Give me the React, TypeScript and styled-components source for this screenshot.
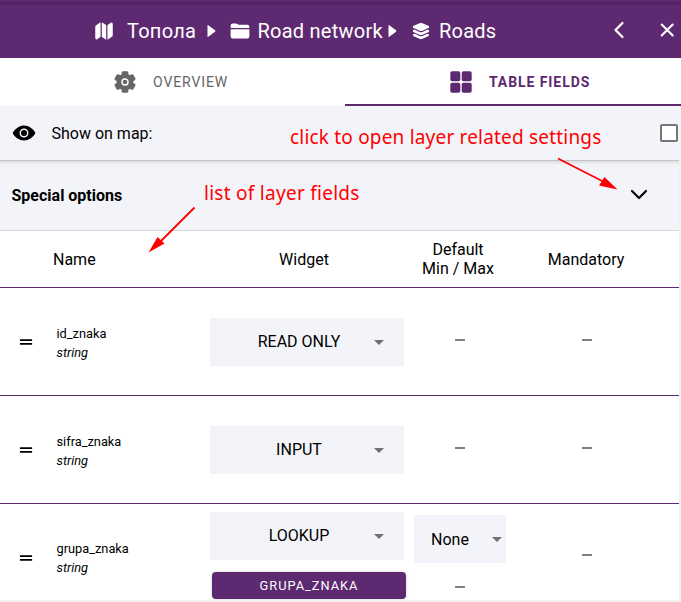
import React from "react";
import styled, { createGlobalStyle } from "styled-components";
import {
  IoMap,
  IoFolder,
  IoLayers,
  IoSettings,
  IoEye,
  IoReorderTwo,
} from "react-icons/io5";

const purple = "#5d2971";
const pale = "#f3f4f9";

const GlobalStyle = createGlobalStyle`
  * { box-sizing: border-box; }
  body { margin: 0; background: #fff; overflow: hidden; }
`;

const Page = styled.main`
  position: relative;
  width: 681px;
  height: 602px;
  overflow: hidden;
  display: flex;
  flex-direction: column;
  background: #fff;
  color: #000;
  font: 16px/19px Roboto, sans-serif;
`;

const Header = styled.header`
  height: 58px;
  flex: none;
  display: flex;
  align-items: center;
  padding: 4px 6px 0 94px;
  background: linear-gradient(#5d2971 0 2px, #4e205f 2px, #5d2971 6px);
  color: #fff;
`;

const Crumb = styled.div<{ $width: number; $gap: number; $spacing: number }>`
  display: flex;
  align-items: center;
  gap: ${(p) => p.$gap}px;
  width: ${(p) => p.$width}px;
  font-size: 20px;
  line-height: 24px;
  letter-spacing: ${(p) => p.$spacing}px;
  white-space: nowrap;
  svg { flex: none; }
`;

const Separator = styled.svg<{ $after: number }>`
  flex: none;
  width: 9px;
  height: 12px;
  margin-right: ${(p) => p.$after}px;
`;

const HeaderActions = styled.div`
  display: flex;
  align-items: center;
  gap: 34px;
  height: 20px;
  margin: -3px 0 0 auto;
`;

const Tabs = styled.nav`
  height: 48px;
  flex: none;
  display: grid;
  grid-template-columns: 345px 336px;
`;

const Tab = styled.div<{ $active?: boolean }>`
  display: flex;
  align-items: center;
  gap: ${(p) => (p.$active ? 17 : 16)}px;
  padding-left: ${(p) => (p.$active ? 105 : 113)}px;
  padding-top: ${(p) => (p.$active ? 2 : 0)}px;
  border-bottom: ${(p) => (p.$active ? `2px solid ${purple}` : "0")};
  color: ${(p) => (p.$active ? purple : "#666")};
  font-size: 14px;
  font-weight: ${(p) => (p.$active ? 700 : 400)};
  letter-spacing: ${(p) => (p.$active ? 0.92 : 0.9)}px;
`;

const MapRow = styled.section`
  height: 54px;
  flex: none;
  display: flex;
  align-items: center;
  gap: 15.5px;
  padding: 0 3px 0 12px;
  background: ${pale};
`;

const Checkbox = styled.span`
  width: 18px;
  height: 18px;
  margin-left: auto;
  border: 2px solid #767676;
  border-radius: 2px;
  background: #fff;
`;

const Panel = styled.div`
  flex: 1;
  width: 681px;
  border-right: 2px solid #f0f0f0;
  border-bottom: 2px solid #f0f0f0;
  overflow: hidden;
`;

const SpecialOptions = styled.section`
  height: 71px;
  display: flex;
  align-items: center;
  justify-content: space-between;
  padding: 0 31px 0 11.5px;
  background: linear-gradient(#c4c5c9 0 1px, #dcdde1 1px, ${pale} 5px);
  border-bottom: 1px solid #d5d6da;
  font-weight: 700;
`;

const Grid = styled.div<{ $height: number }>`
  display: grid;
  grid-template-columns: 53px 156px 202px 94px 174px;
  height: ${(p) => p.$height}px;
  border-bottom: 1px solid ${purple};
  align-items: center;
`;

const Heading = styled.div<{ $nudge?: number }>`
  text-align: center;
  padding-right: ${(p) => p.$nudge ?? 0}px;
`;

const NameHeading = styled(Heading)`
  text-align: left;
`;

const Handle = styled.div`
  display: flex;
  padding-left: 16px;
`;

const FieldName = styled.div<{ $shift: number }>`
  padding-left: 3.5px;
  margin-top: ${(p) => p.$shift}px;
  font-size: 12.8px;
  em { display: block; }
`;

const WidgetCell = styled.div<{ $top?: boolean }>`
  display: flex;
  flex-direction: column;
  gap: 12px;
  padding-left: 1px;
  align-self: ${(p) => (p.$top ? "start" : "center")};
  padding-top: ${(p) => (p.$top ? 8 : 0)}px;
`;

const Select = styled.div<{ $width: number; $end: number; $lift?: number }>`
  width: ${(p) => p.$width}px;
  height: 48px;
  display: grid;
  grid-template-columns: 1fr 10px;
  align-items: center;
  padding: 0 ${(p) => p.$end}px ${(p) => p.$lift ?? 0}px 16px;
  background: ${pale};
  text-align: center;
  svg { margin-top: 1px; }
`;

const SelectLabel = styled.span<{ $inset: number }>`
  padding-right: ${(p) => p.$inset}px;
`;

const LookupButton = styled.button`
  width: 194px;
  height: 27px;
  margin-left: 2px;
  padding: 0;
  border: 0;
  border-radius: 4px;
  background: ${purple};
  box-shadow: 0 0 3px rgba(0, 0, 0, 0.2);
  color: #fff;
  font: 12.8px/27px Roboto, sans-serif;
  letter-spacing: 1px;
`;

const DashCell = styled.div<{ $left: number; $shift?: number }>`
  display: flex;
  flex-direction: column;
  padding-left: ${(p) => p.$left}px;
  margin-top: ${(p) => p.$shift ?? 0}px;
`;

const Dash = styled.span`
  width: 10px;
  height: 2px;
  background: #808080;
`;

const DefaultCell = styled.div`
  display: flex;
  flex-direction: column;
  align-self: start;
  gap: 23px;
  padding: 11px 0 0 3px;
  ${Dash} { margin-left: 41px; }
`;

const Note = styled.span<{ $x: number; $y: number; $spacing: number }>`
  position: absolute;
  left: ${(p) => p.$x}px;
  top: ${(p) => p.$y}px;
  color: #f00;
  font: 19px/26px "Noto Sans", sans-serif;
  letter-spacing: ${(p) => p.$spacing}px;
  white-space: nowrap;
`;

const Arrows = styled.svg`
  position: absolute;
  left: 140px;
  top: 150px;
`;

const Caret = () => (
  <svg width="10" height="5" viewBox="0 0 10 5">
    <path d="M0 0h10L5 5z" fill="#717174" />
  </svg>
);

const CrumbArrow = ({ after }: { after: number }) => (
  <Separator $after={after} viewBox="0 0 9 12">
    <path d="M.5.5Q.5-.3 1.3.3L8 5.3q.9.7 0 1.4L1.3 11.7q-.8.6-.8-.2z" fill="#fff" />
  </Separator>
);

const TilesIcon = () => (
  <svg width="22" height="22" viewBox="0 0 22 22" fill={purple}>
    <rect x="0.300" y="0.300" width="10" height="10" rx="1.800" />
    <rect x="11.700" y="0.300" width="10" height="10" rx="1.800" />
    <rect x="0.300" y="11.700" width="10" height="10" rx="1.800" />
    <rect x="11.700" y="11.700" width="10" height="10" rx="1.800" />
  </svg>
);

type Field = { name: string; widget: string };
const fields: Field[] = [
  { name: "id_znaka", widget: "READ ONLY" },
  { name: "sifra_znaka", widget: "INPUT" },
];

const Name = ({ value, shift = 3 }: { value: string; shift?: number }) => (
  <>
    <Handle><IoReorderTwo size={20} /></Handle>
    <FieldName $shift={shift}>{value}<em>string</em></FieldName>
  </>
);

const WidgetSelect = ({ value, lift }: { value: string; lift?: number }) => (
  <Select $width={194} $end={20} $lift={lift}>
    <SelectLabel $inset={2}>{value}</SelectLabel>
    <Caret />
  </Select>
);

export default function App() {
  return (
    <Page>
      <GlobalStyle />
      <Header>
        <Crumb $width={113} $gap={13} $spacing={0.25}><IoMap size={20} />Топола</Crumb>
        <CrumbArrow after={14} />
        <Crumb $width={158} $gap={7.5} $spacing={0.24}><IoFolder size={20} />Road network</Crumb>
        <CrumbArrow after={14} />
        <Crumb $width={100} $gap={8} $spacing={0.2}><IoLayers size={20} />Roads</Crumb>
        <HeaderActions>
          <svg width="12" height="18" viewBox="0 0 12 18">
            <path d="m9.500 2-7 7 7 7" fill="none" stroke="#fff" strokeWidth="2.2" strokeLinecap="round" strokeLinejoin="round" />
          </svg>
          <svg width="16" height="16" viewBox="0 0 16 16">
            <path d="m2.700 2.500 11 11m0-11-11 11" stroke="#fff" strokeWidth="2.1" strokeLinecap="round" />
          </svg>
        </HeaderActions>
      </Header>
      <Tabs>
        <Tab><IoSettings size={24} />OVERVIEW</Tab>
        <Tab $active><TilesIcon />TABLE FIELDS</Tab>
      </Tabs>
      <MapRow><IoEye size={24} />Show on map:<Checkbox /></MapRow>
      <Panel>
        <SpecialOptions>
          Special options
          <svg width="18" height="12" viewBox="0 0 18 12">
            <path d="m2 2 7 7 7-7" fill="none" stroke="#000" strokeWidth="2.2" strokeLinecap="round" strokeLinejoin="round" />
          </svg>
        </SpecialOptions>
        <Grid $height={57}>
          <span />
          <NameHeading>Name</NameHeading>
          <Heading $nudge={12}>Widget</Heading>
          <Heading>Default<br />Min / Max</Heading>
          <Heading $nudge={12}>Mandatory</Heading>
        </Grid>
        {fields.map((f) => (
          <Grid $height={108} key={f.name}>
            <Name value={f.name} />
            <WidgetCell><WidgetSelect value={f.widget} /></WidgetCell>
            <DashCell $left={44} $shift={-3}><Dash /></DashCell>
            <DashCell $left={77} $shift={-3}><Dash /></DashCell>
          </Grid>
        ))}
        <Grid $height={108}>
          <Name value="grupa_znaka" shift={1} />
          <WidgetCell $top>
            <WidgetSelect value="LOOKUP" lift={1} />
            <LookupButton>GRUPA_ZNAKA</LookupButton>
          </WidgetCell>
          <DefaultCell>
            <Select $width={92} $end={4}>
              <SelectLabel $inset={22}>None</SelectLabel>
              <Caret />
            </Select>
            <Dash />
          </DefaultCell>
          <DashCell $left={77} $shift={-5}><Dash /></DashCell>
        </Grid>
      </Panel>
      <Note $x={290} $y={124} $spacing={0.19}>click to open layer related settings</Note>
      <Note $x={204} $y={180} $spacing={0.27}>list of layer fields</Note>
      <Arrows width="490" height="110" viewBox="140 150 490 110" fill="#f00" stroke="#f00">
        <path d="m558 158.500 50 25.500M194.500 207.500l-36 36" strokeWidth="1.8" />
        <path d="m617.500 189.500-18.500-4 5.500-8.500zM148.500 252.500l9-15.500 7 6.500z" stroke="none" />
      </Arrows>
    </Page>
  );
}
